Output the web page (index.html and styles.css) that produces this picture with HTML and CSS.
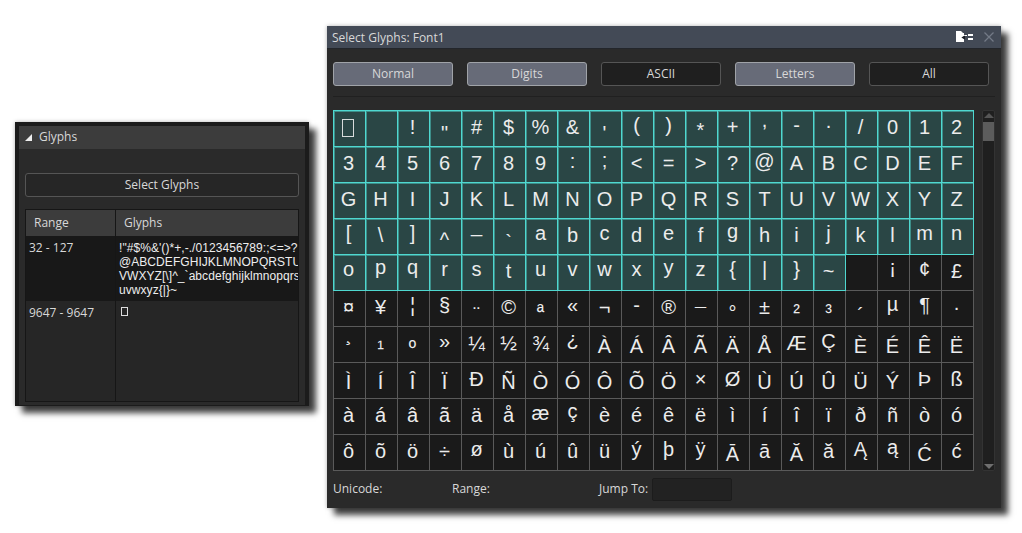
FILE: index.html
```html
<!DOCTYPE html>
<html lang="en">
<head>
    <meta charset="UTF-8">
    <title>Select Glyphs</title>
    <link rel="stylesheet" href="styles.css">
</head>
<body>
    <!-- Glyphs panel -->
    <div class="window panel">
        <div class="panel-head"><span class="twist"></span>Glyphs</div>
        <button class="btn btn-wide">Select Glyphs</button>
        <div class="ranges">
            <div class="ranges-head">
                <div class="col-range">Range</div>
                <div class="col-glyphs">Glyphs</div>
            </div>
            <div class="ranges-row row-dark">
                <div class="col-range">32 - 127</div>
                <div class="col-glyphs sample">!"#$%&amp;'()*+,-./0123456789:;&lt;=&gt;?<br>@ABCDEFGHIJKLMNOPQRSTU<br>VWXYZ[\]^_`abcdefghijklmnopqrs<br>uvwxyz{|}~</div>
            </div>
            <div class="ranges-row row-fill">
                <div class="col-range">9647 - 9647</div>
                <div class="col-glyphs sample"><span class="tofu-small"></span></div>
            </div>
        </div>
    </div>

    <!-- Select Glyphs dialog -->
    <div class="window dialog">
        <div class="titlebar">
            <span class="title">Select Glyphs: Font1</span>
            <svg class="folder-icon" width="18" height="12" viewBox="0 0 18 12">
                <path fill="#fff" d="M0 0h5l2 2h1v2h3v1H8l-2.500 1.500L8 8v3H0z"/>
                <path fill="#fff" d="M12 3h5v2h-5zM12 7h5v2h-5z"/>
                <path fill="#1a1d24" d="M5.500 6.500L9 4.500v4z"/>
            </svg>
            <svg class="close-icon" width="10" height="10" viewBox="0 0 10 10">
                <path d="M0.500 0.500l9 9M9.500 0.500l-9 9" stroke="#737a86" stroke-width="1.300" fill="none"/>
            </svg>
        </div>

        <div class="filters">
            <button class="btn btn-on">Normal</button>
            <button class="btn btn-on">Digits</button>
            <button class="btn">ASCII</button>
            <button class="btn btn-on">Letters</button>
            <button class="btn">All</button>
        </div>
        <div class="divider"></div>

        <div class="picker">
            <div class="glyphs">
                <!-- 32..  -->
                <div class="g t"><span class="tofu"></span></div><div class="g t"></div><div class="g t">!</div><div class="g t d5">"</div><div class="g t">#</div><div class="g t">$</div><div class="g t">%</div><div class="g t">&amp;</div><div class="g t d5">'</div><div class="g t u2">(</div><div class="g t u2">)</div><div class="g t d2">*</div><div class="g t">+</div><div class="g t u7">,</div><div class="g t u2">-</div><div class="g t u6">.</div><div class="g t">/</div><div class="g t">0</div><div class="g t">1</div><div class="g t">2</div>
                <div class="g t">3</div><div class="g t">4</div><div class="g t">5</div><div class="g t">6</div><div class="g t">7</div><div class="g t">8</div><div class="g t">9</div><div class="g t u2">:</div><div class="g t u3">;</div><div class="g t">&lt;</div><div class="g t">=</div><div class="g t">&gt;</div><div class="g t">?</div><div class="g t u2">@</div><div class="g t">A</div><div class="g t">B</div><div class="g t">C</div><div class="g t">D</div><div class="g t">E</div><div class="g t">F</div>
                <div class="g t">G</div><div class="g t">H</div><div class="g t">I</div><div class="g t">J</div><div class="g t">K</div><div class="g t">L</div><div class="g t">M</div><div class="g t">N</div><div class="g t">O</div><div class="g t">P</div><div class="g t">Q</div><div class="g t">R</div><div class="g t">S</div><div class="g t">T</div><div class="g t">U</div><div class="g t">V</div><div class="g t">W</div><div class="g t">X</div><div class="g t">Y</div><div class="g t">Z</div>
                <div class="g t u2">[</div><div class="g t">\</div><div class="g t u2">]</div><div class="g t d4">^</div><div class="g t u10">_</div><div class="g t d6">`</div><div class="g t u2">a</div><div class="g t">b</div><div class="g t u2">c</div><div class="g t">d</div><div class="g t u2">e</div><div class="g t">f</div><div class="g t u4">g</div><div class="g t">h</div><div class="g t">i</div><div class="g t u2">j</div><div class="g t">k</div><div class="g t">l</div><div class="g t u2">m</div><div class="g t u2">n</div>
                <div class="g t u2">o</div><div class="g t u4">p</div><div class="g t u4">q</div><div class="g t u2">r</div><div class="g t u2">s</div><div class="g t">t</div><div class="g t u2">u</div><div class="g t u2">v</div><div class="g t u2">w</div><div class="g t u2">x</div><div class="g t u4">y</div><div class="g t u2">z</div><div class="g t u2">{</div><div class="g t u2">|</div><div class="g t u2">}</div><div class="g t">~</div><div class="g"></div><div class="g u4">¡</div><div class="g u2">¢</div><div class="g">£</div>
                <!-- latin-1 -->
                <div class="g">¤</div><div class="g">¥</div><div class="g u2">¦</div><div class="g u2">§</div><div class="g d6">¨</div><div class="g">©</div><div class="g d4">ª</div><div class="g u2">«</div><div class="g">¬</div><div class="g u2">-</div><div class="g">®</div><div class="g d7">¯</div><div class="g d5">°</div><div class="g">±</div><div class="g d4">²</div><div class="g d4">³</div><div class="g d7">´</div><div class="g u3">µ</div><div class="g u2">¶</div><div class="g">·</div>
                <div class="g u9">¸</div><div class="g d4">¹</div><div class="g d4">º</div><div class="g u2">»</div><div class="g">¼</div><div class="g">½</div><div class="g">¾</div><div class="g u4">¿</div><div class="g d2">À</div><div class="g d2">Á</div><div class="g d2">Â</div><div class="g d2">Ã</div><div class="g d2">Ä</div><div class="g d2">Å</div><div class="g">Æ</div><div class="g u2">Ç</div><div class="g d2">È</div><div class="g d2">É</div><div class="g d2">Ê</div><div class="g d2">Ë</div>
                <div class="g d2">Ì</div><div class="g d2">Í</div><div class="g d2">Î</div><div class="g d2">Ï</div><div class="g">Ð</div><div class="g d2">Ñ</div><div class="g d2">Ò</div><div class="g d2">Ó</div><div class="g d2">Ô</div><div class="g d2">Õ</div><div class="g d2">Ö</div><div class="g">×</div><div class="g">Ø</div><div class="g d2">Ù</div><div class="g d2">Ú</div><div class="g d2">Û</div><div class="g d2">Ü</div><div class="g d2">Ý</div><div class="g">Þ</div><div class="g">ß</div>
                <div class="g">à</div><div class="g">á</div><div class="g">â</div><div class="g">ã</div><div class="g">ä</div><div class="g">å</div><div class="g u2">æ</div><div class="g u4">ç</div><div class="g">è</div><div class="g">é</div><div class="g">ê</div><div class="g">ë</div><div class="g">ì</div><div class="g">í</div><div class="g">î</div><div class="g">ï</div><div class="g">ð</div><div class="g">ñ</div><div class="g">ò</div><div class="g">ó</div>
                <div class="g">ô</div><div class="g">õ</div><div class="g">ö</div><div class="g">÷</div><div class="g u2">ø</div><div class="g">ù</div><div class="g">ú</div><div class="g">û</div><div class="g">ü</div><div class="g u2">ý</div><div class="g u2">þ</div><div class="g u2">ÿ</div><div class="g d2">Ā</div><div class="g">ā</div><div class="g d2">Ă</div><div class="g">ă</div><div class="g u2">Ą</div><div class="g u4">ą</div><div class="g d2">Ć</div><div class="g">ć</div>
            </div>
            <div class="scrollbar">
                <span class="arrow-up"></span>
                <span class="thumb"></span>
                <span class="arrow-down"></span>
            </div>
        </div>

        <div class="status">
            <span class="lbl-unicode">Unicode:</span>
            <span class="lbl-range">Range:</span>
            <span class="lbl-jump">Jump To:</span>
            <input class="jump" type="text">
        </div>
    </div>
</body>
</html>
```
FILE: styles.css
```css
body {
    margin: 0;
    background: #fff;
    font-family: "Open Sans", sans-serif;
    font-size: 12px;
    color: #d8d8d8;
}
button, input {
    font: inherit;
    color: inherit;
}

/* windows sit on a free canvas */
.window {
    position: absolute;
    box-sizing: border-box;
    background: #2a2a2a;
    box-shadow: 7px 7px 6px rgba(0, 0, 0, 0.75), 0 0 4px rgba(0, 0, 0, 0.3);
}
.btn {
    display: block;
    box-sizing: border-box;
    width: 120px;
    height: 24px;
    padding: 0 0 2px;
    background: #1f1f1f;
    border: 1px solid #555;
    border-radius: 3px;
}
.btn-on {
    background: #676b78;
    border-color: #a0a3a8;
}

/* Glyphs panel */
.panel {
    left: 15px;
    top: 122px;
    width: 294px;
    height: 284px;
    border: 4px solid #1b1b1b;
    border-bottom-width: 1px;
}
.panel-head {
    display: flex;
    align-items: center;
    height: 23px;
    padding: 0 0 2px 6px;
    box-sizing: border-box;
    background: #3c3c3c;
}
.twist {
    width: 7px;
    height: 7px;
    margin: 2px 7px 0 0;
    background: #eee;
    clip-path: polygon(100% 0, 100% 100%, 0 100%);
}
.btn-wide {
    width: 274px;
    margin: 24px 0 12px 6px;
    background: #262626;
}
.ranges {
    display: flex;
    flex-direction: column;
    box-sizing: border-box;
    width: 274px;
    height: 193px;
    margin-left: 6px;
    border: 1px solid #161616;
    overflow: hidden;
}
.ranges-head {
    display: flex;
    height: 26px;
    line-height: 26px;
    background: #3c3c3c;
}
.ranges-head .col-range {
    padding: 0 0 0 8px;
}
.ranges-head .col-glyphs {
    padding-left: 8px;
}
.ranges-row {
    display: flex;
}
.row-dark {
    height: 65px;
    background: #181818;
}
.row-fill {
    flex: 1;
    background: #262626;
}
.col-range {
    box-sizing: border-box;
    flex: 0 0 90px;
    padding: 3px 0 0 3px;
    border-right: 1px solid #161616;
}
.col-glyphs {
    flex: 1;
    padding-left: 3px;
    white-space: nowrap;
    overflow: hidden;
}
.sample {
    padding-top: 5px;
    font-family: "Liberation Sans", sans-serif;
    line-height: 14px;
    letter-spacing: 0.06px;
    color: #eee;
}
.tofu-small {
    display: block;
    box-sizing: border-box;
    width: 7px;
    height: 9px;
    margin: 1px 0 0 2px;
    border: 1px solid #ddd;
}

/* Select Glyphs dialog */
.dialog {
    left: 327px;
    top: 26px;
    width: 674px;
    height: 482px;
}
.titlebar {
    display: flex;
    align-items: center;
    height: 23px;
    padding: 0 7px 0 5px;
    background: #434a56;
    border-bottom: 1px solid #23262b;
    box-sizing: border-box;
}
.title {
    flex: 1;
}
.folder-icon {
    margin-right: 10px;
}
.filters {
    display: flex;
    gap: 14px;
    padding: 13px 0 0 6px;
}
.divider {
    height: 1px;
    margin: 10px 6px 13px;
    background: #202020;
}
.picker {
    display: flex;
    padding-left: 6px;
}
.glyphs {
    display: grid;
    grid-template-columns: repeat(20, 32px);
    grid-template-rows: repeat(10, 36px);
    padding: 0 1px 1px 0;
}
.g {
    display: flex;
    align-items: center;
    justify-content: center;
    box-sizing: border-box;
    margin: 0 -1px -1px 0;
    padding: 0 2px 2px 0;
    border: 1px solid #5a5a5a;
    background: #1a1a1a;
    font-family: "Liberation Sans", sans-serif;
    font-size: 20px;
    color: #ececec;
}
.t {
    z-index: 1;
    border-color: #4fd8d0;
    background: #2a4645;
    box-shadow: inset 1px 1px 0 rgba(79, 216, 208, 0.5);
}
.tofu {
    box-sizing: border-box;
    flex: none;
    width: 12px;
    height: 18px;
    margin-right: 1px;
    border: 1px solid #d8dcdc;
}

/* glyphs are centred on their ink, not on the line box */
.u2 { padding-bottom: 6px; }
.u3 { padding-bottom: 8px; }
.u4 { padding-bottom: 10px; }
.u6 { padding-bottom: 14px; }
.u7 { padding-bottom: 16px; }
.u9 { padding-bottom: 20px; }
.u10 { padding-bottom: 22px; }
.d2 { padding-top: 4px; padding-bottom: 0; }
.d4 { padding-top: 8px; padding-bottom: 0; }
.d5 { padding-top: 10px; padding-bottom: 0; }
.d6 { padding-top: 12px; padding-bottom: 0; }
.d7 { padding-top: 14px; padding-bottom: 0; }

.scrollbar {
    display: flex;
    flex-direction: column;
    align-items: center;
    box-sizing: border-box;
    width: 13px;
    height: 361px;
    margin-left: 8px;
    padding: 2px 0 1px;
    background: #1f1f1f;
    border: 1px solid #333;
    border-radius: 2px;
}
.arrow-up, .arrow-down {
    width: 0;
    height: 0;
    border-left: 5px solid transparent;
    border-right: 5px solid transparent;
}
.arrow-up {
    border-bottom: 5px solid #555;
}
.arrow-down {
    border-top: 5px solid #6f6f6f;
}
.thumb {
    width: 11px;
    height: 19px;
    margin: 4px 0 auto;
    background: #5c5c5c;
}
.status {
    display: flex;
    align-items: center;
    margin-top: 7px;
    padding-left: 6px;
}
.status span {
    padding-bottom: 2px;
}
.lbl-unicode {
    width: 119px;
}
.lbl-range {
    width: 147px;
}
.lbl-jump {
    width: 53px;
}
.jump {
    box-sizing: border-box;
    width: 80px;
    height: 23px;
    padding: 0;
    background: #222;
    border: 1px solid #1c1c1c;
    border-radius: 2px;
}
```
